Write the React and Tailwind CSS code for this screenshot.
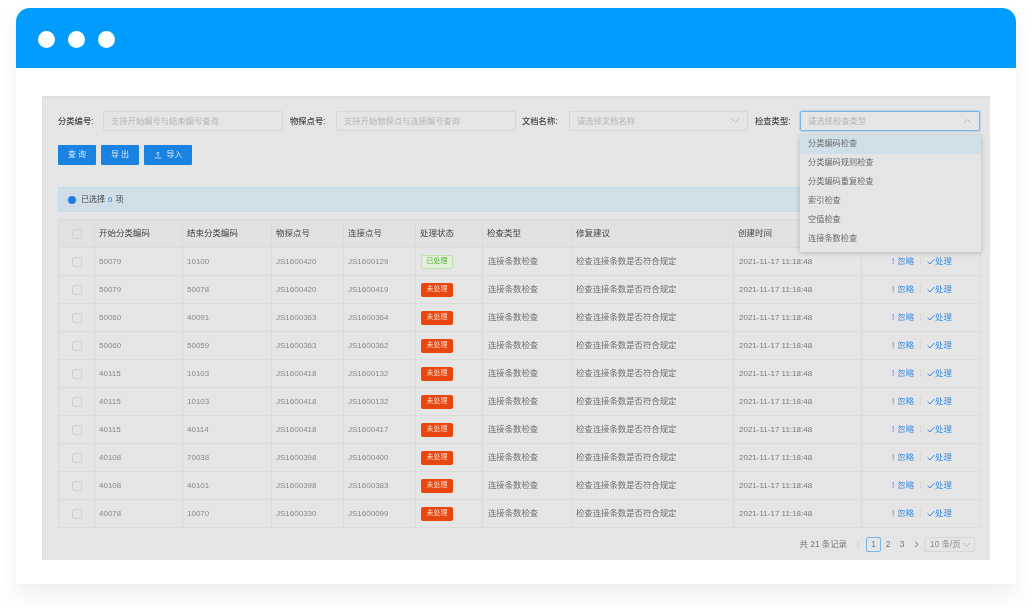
import React from 'react';

const rows = [
  ['50079','10100','JS1600420','JS1600129',true],
  ['50079','50078','JS1600420','JS1600419',false],
  ['50060','40091','JS1600363','JS1600364',false],
  ['50060','50059','JS1600363','JS1600362',false],
  ['40115','10103','JS1600418','JS1600132',false],
  ['40115','10103','JS1600418','JS1600132',false],
  ['40115','40114','JS1600418','JS1600417',false],
  ['40108','70038','JS1600398','JS1600400',false],
  ['40108','40101','JS1600398','JS1600383',false],
  ['40078','10070','JS1600330','JS1600099',false],
];
const heads = ['开始分类编码','结束分类编码','物探点号','连接点号','处理状态','检查类型','修复建议','创建时间',''];
const options = ['分类编码检查','分类编码规则检查','分类编码重复检查','索引检查','空值检查','连接条数检查'];
const cols = [36,88,89,72,72,67,89,162,128,119];

function Chevron({ up }) {
  return (
    <svg width="9" height="6" viewBox="0 0 9 6" fill="none" stroke="#bdbdbd" strokeWidth="1">
      <path d={up ? 'M1 5 L4.5 1.5 L8 5' : 'M1 1 L4.5 4.5 L8 1'} />
    </svg>
  );
}

function Label({ children, className }) {
  return <span className={`text-[8.3px] font-medium text-[#444] whitespace-nowrap ${className}`}>{children}</span>;
}

function Box({ children, className, icon, focus }) {
  return (
    <div className={`h-5 flex items-center justify-between rounded-[2px] border bg-[#e5e5e5] pl-[7px] pr-[7px] text-[8.3px] text-[#b5b5b5] whitespace-nowrap ${focus ? 'border-[#7cb4e2] shadow-[0_0_0_1px_#b9d3e9]' : 'border-[#d7d7d7]'} ${className}`}>
      <span>{children}</span>
      {icon}
    </div>
  );
}

function Check() {
  return <span className="block w-[10px] h-[10px] rounded-[2px] border border-[#d2d2d2] mx-auto" />;
}

export default function App() {
  return (
    <div className="w-[1032px] h-[608px] bg-white pt-2 pl-4 overflow-hidden" style={{ fontFamily: '"Liberation Sans", "Noto Sans CJK SC", sans-serif' }}>
      <div className="w-[1000px] h-[576px] bg-white shadow-[0_10px_22px_rgba(0,0,0,0.07)] rounded-t-[14px] blur-[0.7px]">
        <div className="h-[60px] bg-[#009cff] rounded-t-[14px] flex items-center gap-[13px] pl-[22px] pt-[3px]">
          <span className="w-[17px] h-[17px] rounded-full bg-white" />
          <span className="w-[17px] h-[17px] rounded-full bg-white" />
          <span className="w-[17px] h-[17px] rounded-full bg-white" />
        </div>
        <div className="pt-7 pl-[26px]">
          <div className="relative w-[948px] h-[464px] bg-[#e5e5e5] border-t-2 border-l border-[#dedede] pl-[15px] pt-[13px]">
            <div className="flex items-center h-5">
              <Label className="w-[45px]">分类编号:</Label>
              <Box className="w-[180px]">支持开始编号与结束编号查询</Box>
              <Label className="w-[46px] ml-[7px]">物探点号:</Label>
              <Box className="w-[180px]">支持开始物探点与连接编号查询</Box>
              <Label className="w-[47px] ml-[6px]">文档名称:</Label>
              <Box className="w-[179px]" icon={<Chevron />}>请选择文档名称</Box>
              <Label className="w-[45px] ml-[7px]">检查类型:</Label>
              <Box className="w-[180px]" focus icon={<Chevron up />}>请选择检查类型</Box>
            </div>
            <div className="flex gap-[5px] mt-[14px]">
              <button className="w-[38px] h-5 bg-[#1a82e0] rounded-[1px] text-[8px] text-[#dcecf8]">查 询</button>
              <button className="w-[38px] h-5 bg-[#1a82e0] rounded-[1px] text-[8px] text-[#dcecf8]">导 出</button>
              <button className="w-[48px] h-5 bg-[#1a82e0] rounded-[1px] text-[8px] text-[#dcecf8] flex items-center justify-center gap-[5px]">
                <svg width="8" height="8" viewBox="0 0 8 8" fill="none" stroke="#dcecf8" strokeWidth="0.8"><path d="M4 5.5V1M2.4 2.6L4 1l1.6 1.6M.6 7h6.8" /></svg>
                导入
              </button>
            </div>
            <div className="w-[922px] h-[25px] mt-[22px] bg-[#d0dfe7] border border-[#c6dbe8] rounded-[2px] flex items-center pl-[9px] text-[8px] text-[#444]">
              <span className="w-2 h-2 rounded-full bg-[#1a82e0] mr-[5px]" />
              已选择 <span className="text-[#1a82e0] mx-[3px]">0</span> 项
            </div>
            <table className="mt-[7px] w-[922px] table-fixed border-collapse text-[8px] text-[#8a8a8a]">
              <colgroup>
                {cols.map((w, i) => <col key={i} style={{ width: w }} />)}
              </colgroup>
              <thead>
                <tr className="h-7 bg-[#e1e1e1]">
                  <th className="border border-[#dbdbdb]"><Check /></th>
                  {heads.map((h, i) => (
                    <th key={i} className="border border-[#dbdbdb] pl-[4px] text-left font-normal text-[8.5px] text-[#444]">{h}</th>
                  ))}
                </tr>
              </thead>
              <tbody>
                {rows.map((r, i) => (
                  <tr key={i} className="h-7">
                    <td className="border border-[#dbdbdb]"><Check /></td>
                    <td className="border border-[#dbdbdb] pl-[4px]">{r[0]}</td>
                    <td className="border border-[#dbdbdb] pl-[4px]">{r[1]}</td>
                    <td className="border border-[#dbdbdb] pl-[4px]">{r[2]}</td>
                    <td className="border border-[#dbdbdb] pl-[4px]">{r[3]}</td>
                    <td className="border border-[#dbdbdb] pl-[5px]">
                      {r[4] ? (
                        <span className="flex items-center justify-center w-[32px] h-[14px] rounded-[2px] border border-[#bfe3ad] bg-[#e3eedd] text-[#5cb531] text-[7px]">已处理</span>
                      ) : (
                        <span className="flex items-center justify-center w-[32px] h-[14px] rounded-[2px] bg-[#e8470f] text-[#f6d9cd] text-[7px]">未处理</span>
                      )}
                    </td>
                    <td className="border border-[#dbdbdb] pl-[5px] text-[8.4px] text-[#6f6f6f]">连接条数检查</td>
                    <td className="border border-[#dbdbdb] pl-[4px] text-[8.4px] text-[#6f6f6f]">检查连接条数是否符合规定</td>
                    <td className="border border-[#dbdbdb] pl-[5px] text-[#7a7a7a]">2021-11-17 11:18:48</td>
                    <td className="border border-[#dbdbdb] text-[#3b8ae0]">
                      <div className="flex items-center pl-[30px] text-[8.4px]">
                        <span className="mr-[3px]">!</span>忽略
                        <span className="w-px h-2 bg-[#d8d8d8] mx-[6px]" />
                        <svg width="8" height="7" viewBox="0 0 8 7" fill="none" stroke="#3b8ae0" strokeWidth="1"><path d="M.6 3.5L3 6 7.4 1" /></svg>
                        处理
                      </div>
                    </td>
                  </tr>
                ))}
              </tbody>
            </table>
            <div className="w-[917px] mt-[9px] flex items-center justify-end text-[8.4px] text-[#777]">
              <span className="mr-[9px]">共 21 条记录</span>
              <svg className="mr-[5px]" width="5" height="7" viewBox="0 0 5 7" fill="none" stroke="#c4c4c4" strokeWidth="0.8"><path d="M4 .8L1 3.5 4 6.2" /></svg>
              <span className="w-[15px] h-[15px] flex items-center justify-center rounded-[2px] border border-[#7cb4e2] text-[#3b8ae0]">1</span>
              <span className="w-[14px] text-center">2</span>
              <span className="w-[14px] text-center">3</span>
              <svg className="ml-[5px] mr-[5px]" width="5" height="7" viewBox="0 0 5 7" fill="none" stroke="#666" strokeWidth="0.8"><path d="M1 .8L4 3.5 1 6.2" /></svg>
              <span className="w-[51px] h-[15px] flex items-center justify-between pl-[5px] pr-[3px] rounded-[2px] border border-[#d7d7d7] text-[#8a8a8a] whitespace-nowrap">10 条/页<Chevron /></span>
            </div>
            <div className="absolute left-[757px] top-[37px] w-[181px] h-[117px] bg-[#e5e5e5] shadow-[0_1px_5px_rgba(0,0,0,0.22)] rounded-[1px] text-[8.2px] text-[#6a6a6a]">
              {options.map((o, i) => (
                <div key={o} className={`h-[19px] flex items-center pl-2 ${i === 0 ? 'bg-[#cfdfe7]' : ''}`}>{o}</div>
              ))}
            </div>
          </div>
        </div>
      </div>
    </div>
  );
}
